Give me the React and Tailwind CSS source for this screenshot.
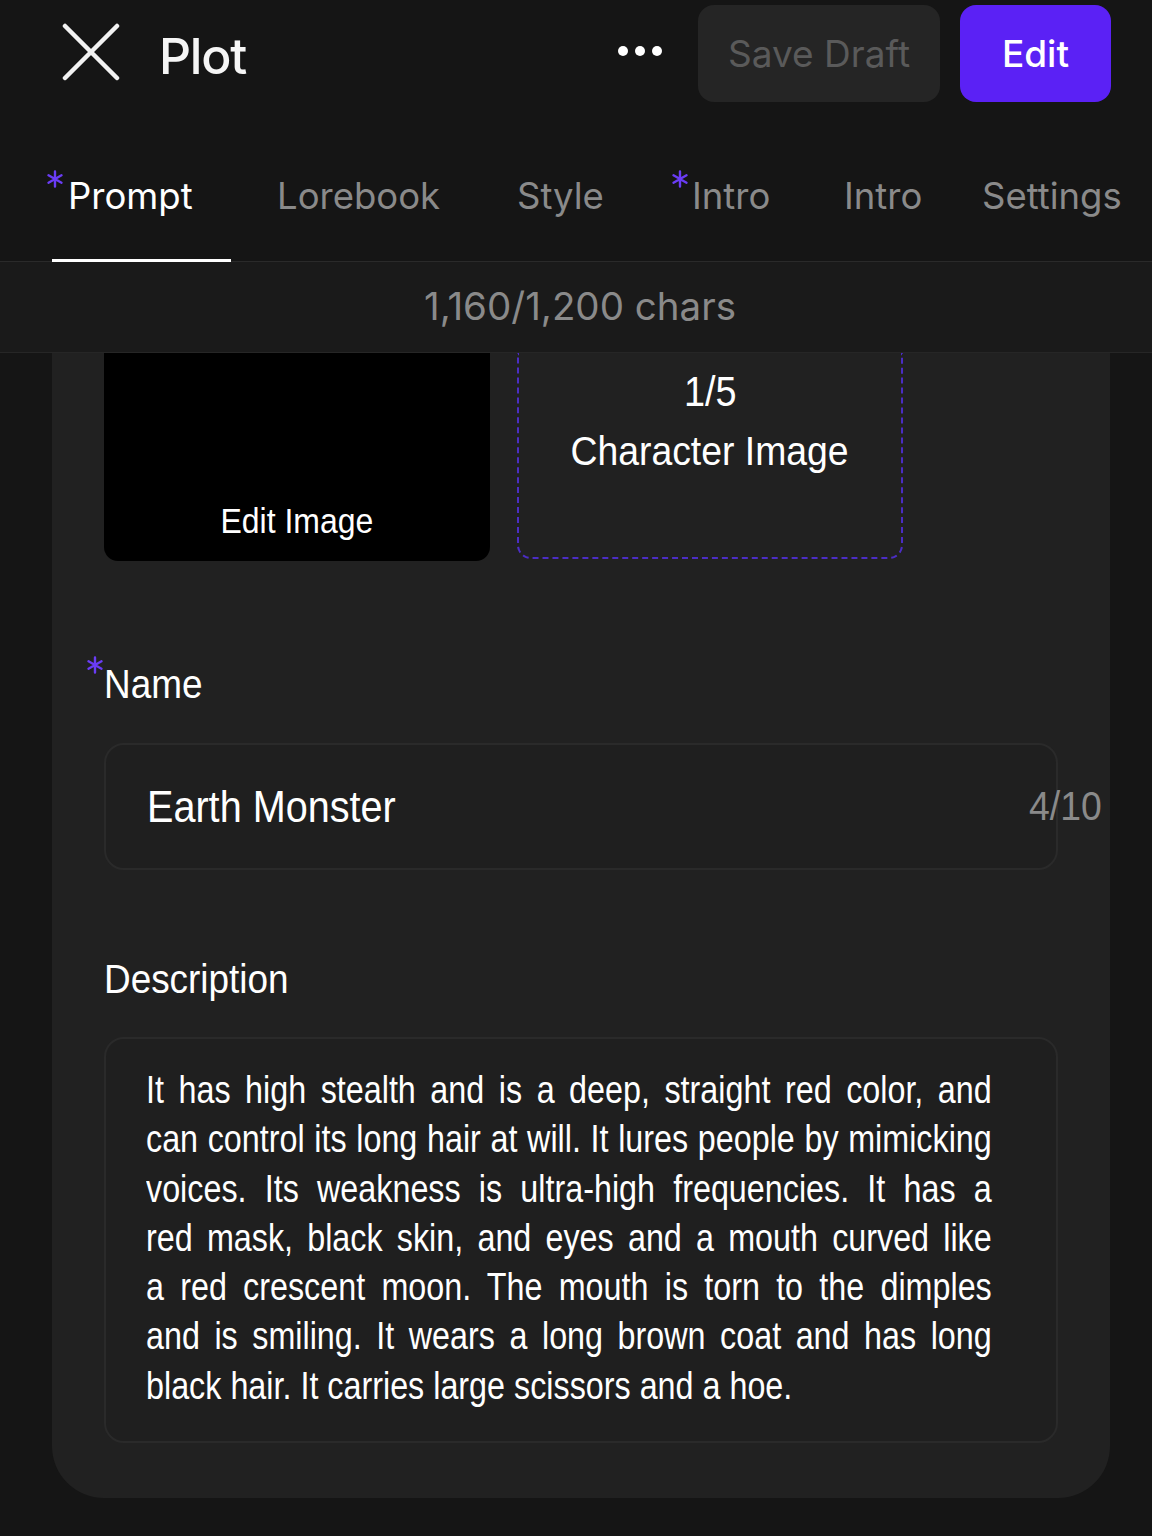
import React from 'react';

const tabs = [
    { label: 'Prompt', required: true, active: true, w: 'w-[225px]', pad: 'pl-[16px]', star: 'left-[-6px]' },
    { label: 'Lorebook', w: 'w-[240px]' },
    { label: 'Style', w: 'w-[154px]' },
    { label: 'Intro', required: true, w: 'w-[173px]', pad: 'pl-[21px]', star: 'left-[0px]' },
    { label: 'Intro', w: 'w-[138px]' },
    { label: 'Settings', w: 'w-[170px]' },
];

const lines = [
    'It has high stealth and is a deep, straight red color, and',
    'can control its long hair at will. It lures people by mimicking',
    'voices. Its weakness is ultra-high frequencies. It has a',
    'red mask, black skin, and eyes and a mouth curved like',
    'a red crescent moon. The mouth is torn to the dimples',
    'and is smiling. It wears a long brown coat and has long',
    'black hair. It carries large scissors and a hoe.',
];

const narrow = { fontFamily: '"Liberation Sans", Arial, sans-serif' };

function Star({ className }) {
    return (
        <svg className={className} width="18" height="18" viewBox="0 0 18 18" stroke="#6a3cf5" strokeWidth="2.4" strokeLinecap="round">
            <path d="M9 1.5 V16.5 M2.5 5.25 L15.5 12.75 M15.5 5.25 L2.5 12.75" />
        </svg>
    );
}

export default function App() {
    return (
        <div className="w-[1152px] h-[1536px] overflow-hidden bg-[#151515] text-white flex flex-col" style={{ fontFamily: 'Inter, "Noto Sans", sans-serif' }}>
            {/* header */}
            <div className="h-[130px] flex items-start pt-[5px] pl-[62px] pr-[41px] shrink-0">
                <div className="flex items-center h-[97px]">
                    <svg width="58" height="58" viewBox="0 0 58 58" fill="none" stroke="#f2f2f2" strokeWidth="4.5" strokeLinecap="round" className="mt-[-4px]">
                        <path d="M3 3 L55 55 M55 3 L3 55" />
                    </svg>
                    <span className="ml-[39px] text-[50px] font-medium tracking-tight text-[#f5f5f5] mt-[6px]">Plot</span>
                </div>
                <div className="ml-auto flex items-center h-[97px]">
                    <div className="flex gap-[7px] mr-[36px] mt-[-6px]">
                        <span className="w-[10px] h-[10px] rounded-full bg-white" />
                        <span className="w-[10px] h-[10px] rounded-full bg-white" />
                        <span className="w-[10px] h-[10px] rounded-full bg-white" />
                    </div>
                    <button className="w-[242px] h-[97px] rounded-[16px] bg-[#252525] text-[#5a5a5a] text-[37px]">Save Draft</button>
                    <button className="ml-[20px] w-[151px] h-[97px] rounded-[16px] bg-[#5b21f5] text-white text-[37px] font-medium">Edit</button>
                </div>
            </div>

            {/* tabs */}
            <div className="h-[132px] shrink-0 flex border-b border-[#2a2a2a] pl-[52px] whitespace-nowrap">
                {tabs.map((t, i) => (
                    <div key={i} className={`relative h-full flex items-center shrink-0 ${t.w} ${t.pad || ''}`}>
                        {t.required && <Star className={`absolute top-[40px] ${t.star}`} />}
                        <span className={`text-[36.5px] pt-[2px] ${t.active ? 'text-white' : 'text-[#8a8a8a]'}`}>{t.label}</span>
                        {t.active && <span className="absolute left-0 w-[179px] bottom-[-1px] h-[3px] bg-white" />}
                    </div>
                ))}
            </div>

            {/* char count */}
            <div className="h-[91px] shrink-0 flex items-center justify-center bg-[#1a1a1a] border-b border-[#262626]">
                <span className="text-[38.5px] text-[#8a8a8a] ml-[8px]">1,160/1,200 chars</span>
            </div>

            {/* scrolled form card */}
            <div className="flex-1 overflow-hidden pl-[52px] pr-[42px] pb-[38px]">
                <div className="h-full bg-[#212121] rounded-b-[52px] px-[52px]" style={narrow}>
                    <div className="flex gap-[27px]">
                        <div className="w-[386px] h-[208px] bg-black rounded-b-[14px] flex items-end justify-center pb-[13px]">
                            <span className="inline-block scale-x-[0.9] text-[35.5px] text-white">Edit Image</span>
                        </div>
                        <div className="w-[386px] h-[206px] border-2 border-t-0 border-dashed border-[#4b2dc4] rounded-b-[14px] flex flex-col items-center pt-[12px]">
                            <span className="inline-block scale-x-[0.9] text-[42px] leading-[54px] text-white">1/5</span>
                            <span className="inline-block scale-x-[0.9] text-[41.5px] leading-[64px] text-white">Character Image</span>
                        </div>
                    </div>

                    <div className="relative mt-[94px] h-[60px] flex items-center">
                        <Star className="absolute left-[-18px] top-[1px]" />
                        <span className="inline-block origin-left scale-x-[0.9] text-[41px] text-white">Name</span>
                    </div>
                    <div className="relative mt-[28px] h-[127px] rounded-[20px] border-2 border-[#2a2a2a] bg-[#1f1f1f] flex items-center pl-[41px]">
                        <span className="inline-block origin-left scale-x-[0.9] text-[44px] text-white">Earth Monster</span>
                        <span className="absolute left-[923px] inline-block origin-left scale-x-[0.9] text-[41.5px] text-[#8a8a8a]">4/10</span>
                    </div>

                    <div className="mt-[88px] h-[44px] flex items-center">
                        <span className="inline-block origin-left scale-x-[0.9] text-[41px] text-white">Description</span>
                    </div>
                    <div className="mt-[35px] h-[406px] rounded-[20px] border-2 border-[#2a2a2a] bg-[#1f1f1f] pl-[40px] pt-[27px] overflow-hidden">
                        <div className="w-[995px] origin-left scale-x-[0.85] text-[38px] leading-[49.3px] text-white">
                            {lines.map((l, i) => (
                                <div key={i} className={`whitespace-nowrap ${i < lines.length - 1 ? 'text-justify [text-align-last:justify]' : ''}`}>{l}</div>
                            ))}
                        </div>
                    </div>
                </div>
            </div>
        </div>
    );
}
